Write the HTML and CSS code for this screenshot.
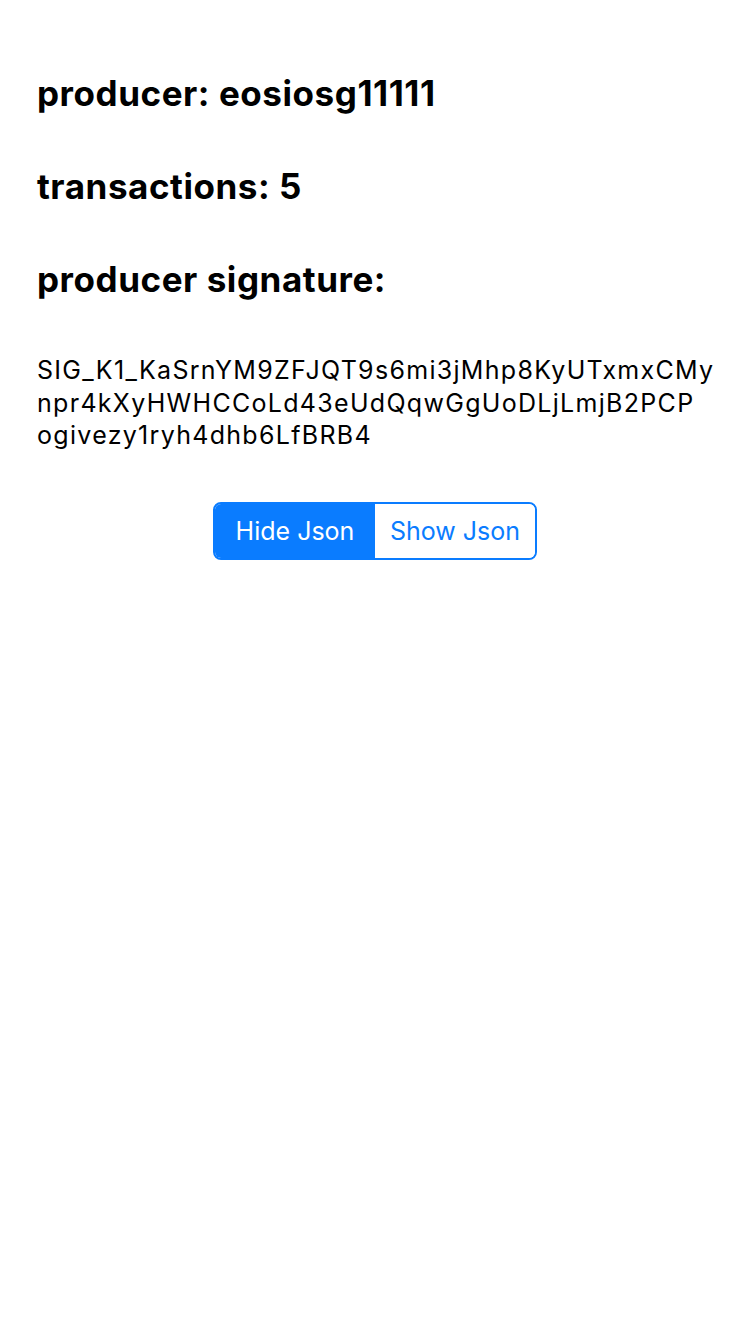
FILE: index.html
```html
<!DOCTYPE html>
<html>
<head>
<meta charset="utf-8">
<link rel="stylesheet" href="styles.css">
</head>
<body>
<main class="page">
  <h2 class="label">producer: eosiosg11111</h2>
  <h2 class="label">transactions: 5</h2>
  <h2 class="label">producer signature:</h2>
  <p class="sig"><span class="sig-line">SIG_K1_KaSrnYM9ZFJQT9s6mi3jMhp8KyUTxmxCMy</span><span class="sig-line">npr4kXyHWHCCoLd43eUdQqwGgUoDLjLmjB2PCP</span><span class="sig-line">ogivezy1ryh4dhb6LfBRB4</span></p>
  <div class="seg-wrap">
    <div class="seg">
      <button class="seg-btn active">Hide Json</button>
      <button class="seg-btn">Show Json</button>
    </div>
  </div>
</main>
</body>
</html>
```
FILE: styles.css
```css
html, body {
  margin: 0;
  padding: 0;
  background: #fff;
}
body {
  font-family: Inter, "Liberation Sans", sans-serif;
  color: #000;
}
.page {
  width: 750px;
  box-sizing: border-box;
  padding: 70px 30px 0 37px;
}
.label {
  margin: 0 0 47px 0;
  font-size: 35px;
  line-height: 46px;
  font-weight: 700;
  letter-spacing: 0.55px;
}
.sig {
  margin: 52px 0 0 0;
  font-size: 25px;
  line-height: 32.5px;
  letter-spacing: 1.3px;
}
.sig-line {
  display: block;
  white-space: nowrap;
}
.seg-wrap {
  display: flex;
  justify-content: center;
  margin-top: 50px;
  padding-right: 7px;
}
.seg {
  display: flex;
  border: 2px solid #0a7cff;
  border-radius: 8px;
  overflow: hidden;
  height: 58px;
  box-sizing: border-box;
}
.seg-btn {
  font-family: Inter, "Liberation Sans", sans-serif;
  font-size: 25px;
  border: 0;
  background: #fff;
  color: #0a7cff;
  padding: 0 14px;
  width: 160px;
}
.seg-btn.active {
  background: #0a7cff;
  color: #fff;
}
```
